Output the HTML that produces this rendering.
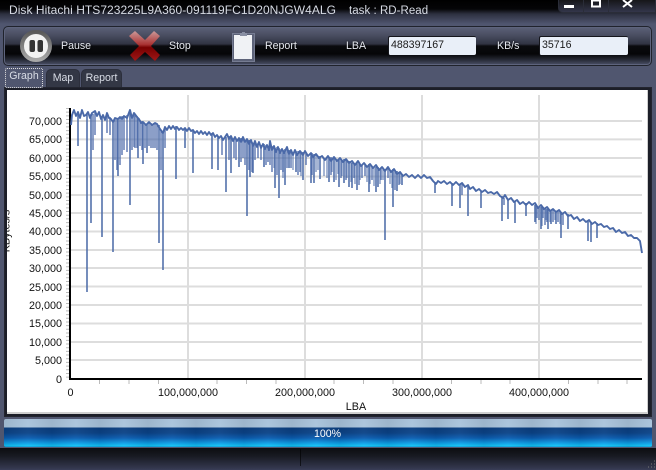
<!DOCTYPE html>
<html><head><meta charset="utf-8"><style>
html,body{margin:0;padding:0;background:#4f5570}
#w{position:relative;width:656px;height:470px;overflow:hidden;font-family:"Liberation Sans",sans-serif;font-size:10.6px;color:#e6e9f0;
background:linear-gradient(#000 0,#050507 9px,#2d3040 14px,#50566f 24px,#50566f 100%)}
#w div{position:absolute;box-sizing:border-box}
.t{white-space:nowrap;text-shadow:0 0 2px #000}
.title{top:3px;font-size:12px;color:#d7dbe4;letter-spacing:.04px;white-space:pre;text-shadow:none}
#bar{left:3px;top:26px;width:649px;height:40px;border:1px solid #20232c;border-radius:5px;
background:linear-gradient(#5c6178 0,#4a4e62 8px,#303342 17px,#0a0b0e 19px,#060608 27px,#22252f 32px,#4c5168 100%);box-shadow:0 0 0 1px #5d637c inset}
.inp{height:19px;top:36px;background:#e9eff8;border-radius:2px;border-top:1px solid #15161c;border-left:1px solid #15161c;color:#1a1a1a;font-size:10.6px;padding:2px 0 0 2px;line-height:13px}
#btn{left:558px;top:-3px;width:98px;height:16px;border:1px solid #2a2d38;border-radius:0 0 0 5px;background:linear-gradient(#111 0,#33364a 100%)}
.tab{top:69px;height:18px;color:#d9dde6;text-align:center;line-height:17px;font-size:10.6px;background:#333745;border:1px solid #2c2f3c;border-bottom:0;border-radius:5px 5px 0 0}
#plot{left:4px;top:87px;width:648px;height:330px;background:#1c1e28;border:1px solid #23252f}
#white{left:7px;top:90px;width:641px;height:324px;background:#fff;border-right:1px solid #cfcfcf;border-bottom:2px solid #cfcfcf;overflow:hidden}
svg{position:absolute;left:0;top:0}
svg text{font-family:"Liberation Sans",sans-serif;font-size:10.8px;fill:#111}
#prog{left:4px;top:419px;width:648px;height:28px;border-radius:2px;background:linear-gradient(#a8c2da 0,#a9c4dc 8px,#0b3f80 9px,#0b4388 14px,#0b5cb0 19px,#0d9de6 24px,#12c6f8 27px,#0a8ac8 28px)}
#mott{left:4px;top:419px;width:648px;height:28px;background:repeating-linear-gradient(90deg,rgba(0,0,0,.07) 0,rgba(255,255,255,.04) 24px,rgba(0,0,0,.07) 48px)}
#st{left:0;top:448px;width:656px;height:22px;background:linear-gradient(#0c0d11 0,#181a22 8px,#33374d 20px,#3a3e57 100%)}
</style></head><body><div id="w">
<div class="t title" style="left:9px">Disk Hitachi HTS723225L9A360-091119FC1D20NJGW4ALG</div>
<div class="t title" style="left:349px;font-size:11.5px;top:3.5px;line-height:14px">task : RD-Read</div>
<div id="btn"></div>
<svg width="656" height="26" style="z-index:2"><path d="M583.5 0V12M608.5 0V12" stroke="#2a2d38"/><rect x="564" y="5" width="10" height="3" fill="#fff"/><rect x="592" y="0.5" width="8" height="6" fill="none" stroke="#fff" stroke-width="2"/><path d="M623 0L632 7M632 0L623 7" stroke="#fff" stroke-width="2"/></svg>
<div id="bar"></div>
<svg width="656" height="70" style="z-index:2">
<defs><linearGradient id="r" x1="0" y1="0" x2="0" y2="1"><stop offset="0" stop-color="#c99"/><stop offset=".45" stop-color="#a33"/><stop offset=".55" stop-color="#700"/><stop offset="1" stop-color="#a01818"/></linearGradient>
<linearGradient id="c" x1="0" y1="0" x2="0" y2="1"><stop offset="0" stop-color="#5a5a5a"/><stop offset="1" stop-color="#a8a8a8"/></linearGradient></defs>
<circle cx="36" cy="46" r="14" fill="#f2f2f2" stroke="url(#c)" stroke-width="4"/>
<rect x="29.500" y="40" width="5.500" height="12" rx="2" fill="#333"/><rect x="37.500" y="40" width="5.500" height="12" rx="2" fill="#333"/>
<path d="M129 36L135 31L145 40L154 31L160 36L151 46L160 55L155 61L145 52L135 61L130 55L139 46Z" fill="url(#r)"/>
<rect x="232.500" y="33.500" width="22" height="28" fill="#5d6379" stroke="#767c92"/>
<rect x="234" y="35" width="18" height="24" fill="#f0f2f5"/>
<path d="M240 36V33H242V32H245V33H247V36Z" fill="#8a90a4"/>
</svg>
<div class="t" style="left:61px;top:40px">Pause</div>
<div class="t" style="left:169px;top:40px">Stop</div>
<div class="t" style="left:265px;top:40px">Report</div>
<div class="t" style="left:346px;top:40px">LBA</div>
<div class="t" style="left:497px;top:40px">KB/s</div>
<div class="inp" style="left:388px;width:88px">488397167</div>
<div class="inp" style="left:539px;width:89px">35716</div>
<div class="tab" style="left:46px;width:34px;top:69px">Map</div>
<div class="tab" style="left:81px;width:41px;top:69px">Report</div>
<div id="plot"></div>
<div class="tab" style="left:5px;width:38px;top:68px;height:20px;background:#50566f;border:1px dotted #ddd;border-radius:2px;line-height:15px;z-index:2">Graph</div>
<div id="white">
<svg width="641" height="322" viewBox="7 90 641 322">
<g stroke="#ddd" stroke-width="2" fill="none">
<path d="M70 121H642M70 139.4H642M70 158H642M70 176.5H642M70 195H642M70 213H642M70 231.5H642M70 250H642M70 268H642M70 286.5H642M70 305H642M70 323.5H642M70 342H642M70 360H642"/>
<path d="M188 95V378M305 95V378M422 95V378M539 95V378"/>
</g>
<path d="M67.5 108V378" stroke="#bbb" stroke-width="3" stroke-dasharray="1 2.68" fill="none"/>
<path d="M99.5 380V384M129 380V384M158.500 380V384M217 380V384M246.500 380V384M276 380V384M334 380V384M363.500 380V384M393 380V384M451.500 380V384M481 380V384M510 380V384M568.500 380V384M598 380V384M627 380V384" stroke="#bbb" fill="none"/>
<path d="M70 108V379H642" stroke="#000" stroke-width="2" fill="none"/>
<path fill="none" stroke="#4a69a8" stroke-width="1.9" stroke-linejoin="round" d="M71 125L72 115L74 110L76 116L78 112L80 118L82 110L84 116L86 115L88 112L90 118L92 113L95 111L97 116L99 112L101 119L103 115L105 120L107 113L109 118L111 119L113 122L115 118L118 119L120 117L122 119L124 116L127 118L130 110L132 118L134 113L137 117L139 119L141 123L143 122L146 125L149 122L152 125L155 123L157 124L160 129L163 133L165 127L167 130L169 126L171 129L173 126L175 129L177 127L179 130L181 128L183 130L185 128L187 131L189 128L191 131L193 130L195 133L197 131L199 134L201 131L203 134L205 132L207 135L209 132L211 135L213 133L215 137L217 135L219 138L221 136L223 140L225 137L227 134L229 139L231 136L233 141L235 137L237 141L239 138L241 142L243 137L245 142L247 139L249 144L251 140L253 146L255 141L257 147L259 142L261 148L263 144L265 149L267 145L269 150L270 141L272 150L274 146L276 152L278 147L280 153L282 149L284 153L287 147L289 154L291 150L293 155L295 150L297 155L300 151L303 155L305 151L308 156L311 153L313 157L316 154L319 158L322 156L325 160L328 156L331 161L334 157L337 161L340 158L343 162L346 159L349 163L352 161L355 165L358 161L361 166L364 163L367 167L370 164L373 168L376 165L379 170L382 167L385 171L388 167L391 172L394 169L397 174L400 172L403 176L406 174L409 177L412 175L415 178L418 175L421 178L424 175L427 178L430 177L433 181L436 184L438 181L441 183L444 181L447 184L450 182L453 185L456 182L459 185L462 183L465 187L468 185L470 189L473 187L476 191L479 189L482 192L485 190L488 193L491 192L494 194L497 192L500 196L503 198L505 195L508 200L511 198L514 202L517 200L520 204L523 202L526 205L529 202L532 205L535 203L538 208L541 205L544 209L547 207L550 211L553 209L556 212L559 210L562 214L565 212L568 216L571 215L574 219L577 217L580 221L583 219L586 222L589 220L592 224L595 222L598 225L601 224L604 227L607 226L610 229L613 228L616 232L619 230L622 233L625 232L628 236L631 235L634 238L637 238L640 241L642 253"/>
<path fill="none" stroke="#4a69a8" stroke-width="1.6" opacity=".95" d="M78 113V146M87 114V292M91 114V223M102 116V237M113 120V252M118 118V176M130 110V205M138 118V158M143 122V164M147 124V153M159 125V243M163 133V270M176 126V179M185 129V148M193 130V173M212 133V169M218 136V170M226 137V192M231 137V173M239 138V167M247 141V216M250 140V177M253 143V173M264 144V167M275 148V188M279 148V198M285 149V185M289 150V168M296 151V172M303 152V180M311 153V183M314 154V183M320 156V179M329 157V182M334 158V182M339 159V187M344 159V183M349 161V187M352 163V188M357 162V190M369 164V192M376 167V192M378 167V187M385 169V240M393 169V207M397 171V191M402 174V185M435 182V193M452 183V206M460 184V208M468 186V216M481 191V208M502 196V221M508 199V219M515 201V223M526 203V216M535 205V222M541 207V229M548 209V229M551 210V224M556 211V224M561 212V238M568 214V229M588 221V241M591 222V242M597 223V238"/>
<path fill="none" stroke="#4a69a8" stroke-width="1.5" opacity=".85" d="M93 114V150M95 112V135M107 114V133M110 117V135M115 118V160M117 118V170M120 118V165M122 116V155M124 116V150M127 115V152M132 115V150M134 114V147M135 114V148M137 116V148M140 120V146M142 121V150M145 124V148M149 122V146M151 123V148M153 124V148M155 123V148M157 124V150M161 130V170M165 128V148M222 138V155M229 136V160M234 138V158M236 139V160M241 138V162M243 138V158M245 140V165M249 140V170M252 142V172M255 143V160M258 143V158M261 145V160M266 145V165M268 146V162M270 143V165M272 146V172M277 147V175M281 149V170M283 150V172M287 149V168M291 151V168M298 151V175M300 152V172M306 153V165M312 153V175M331 157V175M341 159V178M346 160V180M354 163V178M359 163V185M362 165V178M365 165V176M372 167V180M381 168V180M388 169V178M395 170V190M399 172V185M462 184V195M504 198V205M537 206V218M539 207V220M543 207V218M545 208V225M547 209V222M553 210V222M558 211V222M563 213V225"/>
<path fill="none" stroke="#4a69a8" stroke-width="1.4" opacity=".7" d="M274 148V168M283 150V178M293 152V170M301 153V176M316 155V172M318 156V170M324 158V176M327 157V178M332 158V172M336 159V180M338 159V174M342 160V176M347 161V178M351 162V182M355 164V184M360 164V180M367 166V182M370 166V184M374 167V186M380 168V184M383 169V180M390 170V184M392 170V188M400 173V184M536 206V224M542 207V226M546 208V220M550 210V222M555 211V220M560 212V224"/>
<g text-anchor="end">
<text x="62" y="125">70,000</text><text x="62" y="143">65,000</text><text x="62" y="162">60,000</text><text x="62" y="180">55,000</text><text x="62" y="199">50,000</text><text x="62" y="217">45,000</text><text x="62" y="235">40,000</text><text x="62" y="254">35,000</text><text x="62" y="272">30,000</text><text x="62" y="291">25,000</text><text x="62" y="309">20,000</text><text x="62" y="327">15,000</text><text x="62" y="346">10,000</text><text x="62" y="364">5,000</text><text x="62" y="383">0</text>
</g>
<g text-anchor="middle">
<text x="70.500" y="396">0</text><text x="188" y="396">100,000,000</text><text x="305" y="396">200,000,000</text><text x="422" y="396">300,000,000</text><text x="539" y="396">400,000,000</text><text x="356" y="410">LBA</text>
</g>
<text transform="translate(9.500 231) rotate(-90)" text-anchor="middle">KBytes/s</text>
</svg>
</div>
<div id="prog"></div><div id="mott"></div>
<div class="t" style="left:314px;top:428px;color:#fff;text-shadow:none">100%</div>
<div id="st"></div>
<svg width="656" height="470" style="z-index:3;pointer-events:none"><path d="M300.500 449V466" stroke="#000" stroke-opacity=".6"/><path d="M648 467h1M651 467h1M654 467h1M651 464h1M654 464h1M654 461h1" stroke="#777" fill="none"/></svg>
</div></body></html>
